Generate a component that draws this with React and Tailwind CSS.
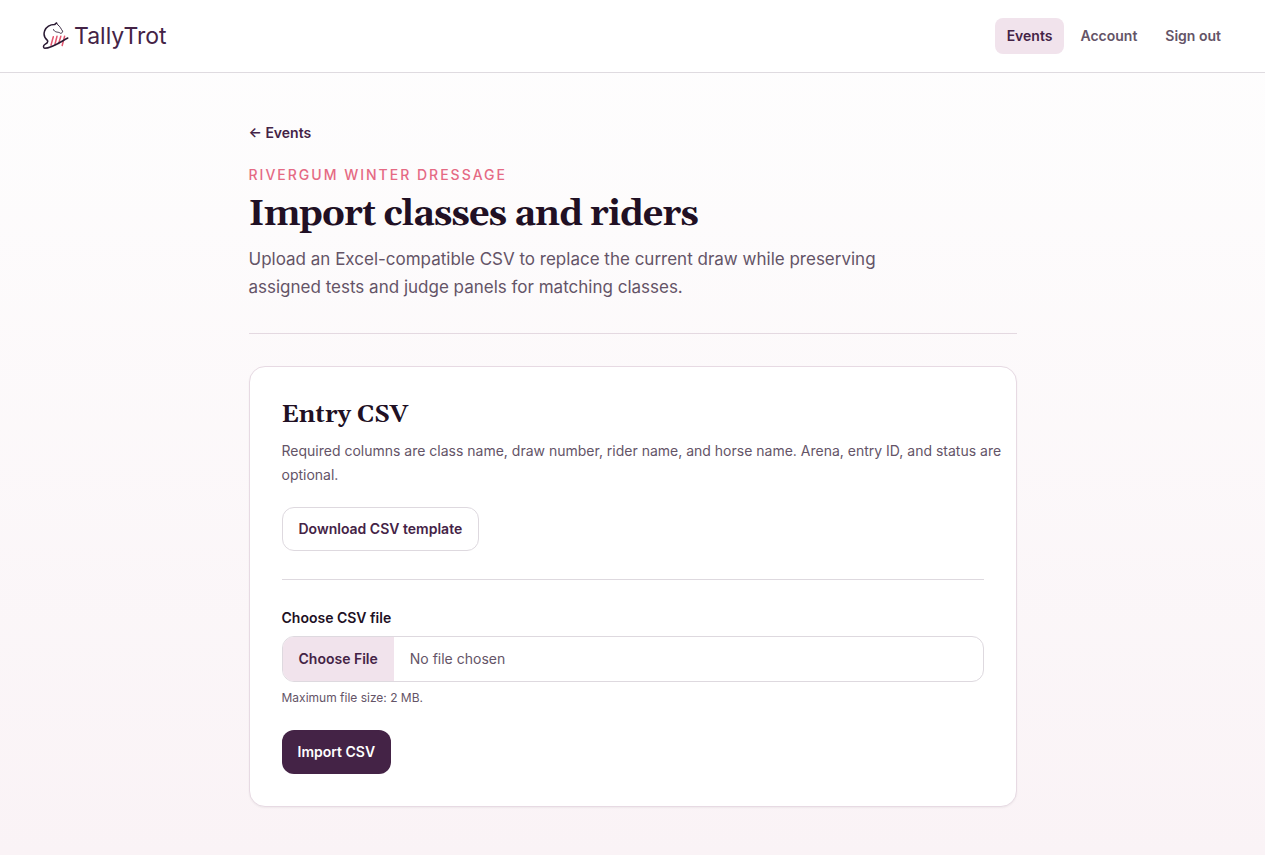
import React, { useState } from 'react';

const navItems = [
  { label: 'Events', href: '#events', current: true },
  { label: 'Account', href: '#account' },
];

const Logo = () => (
  <a href="#home" className="flex items-center gap-1" aria-label="TallyTrot home">
    <svg viewBox="0 0 28 30" className="h-[30px] w-7" fill="none" strokeLinecap="round" strokeLinejoin="round" aria-hidden="true">
      <path d="M11.300 15.800L9 24.300M15 15.300L12.900 23.500M18.800 15.300L16.700 22.500M22.600 15.300L20.200 24.500" stroke="#e2566f" strokeWidth="1.5" />
      <path
        d="M14.600 2C13.800 2.400 13.200 3 12.600 3.600C8.600 3.600 4.500 5.600 2.600 9.900C1.300 13.700 2.600 17.200 5.600 19.700C6.300 21.400 4.600 22.500 2.900 23.400C1.100 24.300 1 27.200 2.700 27.300C9.500 27.300 17 21.800 25.800 17"
        stroke="#2a1a33"
        strokeWidth="1.5"
      />
      <path d="M14.600 2L16 4.100C18 5.100 18.900 7.900 20.600 10.100C20.800 11.300 19.800 12.300 18.500 12.300C17.400 11.300 16 11.300 14.600 11C13 10.600 11.800 9.800 11.500 8.600" stroke="#2a1a33" strokeWidth="0.9" />
    </svg>
    <span className="text-[23px] leading-8 text-[#442346]">TallyTrot</span>
  </a>
);

const Header = () => (
  <header className="border-b border-[#dfdbe0] bg-white">
    <div className="flex h-18 items-center justify-between px-8 sm:pl-[42px]">
      <Logo />
      <nav className="flex items-center gap-1 text-sm font-semibold" aria-label="Main">
        {navItems.map((item) => (
          <a
            key={item.label}
            href={item.href}
            aria-current={item.current ? 'page' : undefined}
            className={`rounded-lg px-3 py-2 ${item.current ? 'bg-[#f1e3ec] text-[#442346]' : 'text-[#645467]'}`}
          >
            {item.label}
          </a>
        ))}
        <button type="button" className="rounded-lg px-3 py-2 text-[#645467]">
          Sign out
        </button>
      </nav>
    </div>
  </header>
);

const ImportForm = () => {
  const [file, setFile] = useState(null);

  return (
    <form className="mt-7 border-t border-[#ded9df] pt-7" onSubmit={(e) => e.preventDefault()}>
      <label htmlFor="csv-file" className="block text-sm font-semibold text-[#211024]">
        Choose CSV file
      </label>
      <input
        id="csv-file"
        type="file"
        accept=".csv"
        aria-describedby="csv-hint"
        onChange={(e) => setFile(e.target.files?.[0] || null)}
        className="mt-2 block w-full overflow-hidden rounded-xl border border-[#ded9df] bg-white text-sm text-[#645467] file:mr-4 file:h-11 file:border-0 file:bg-[#f1e3ec] file:px-4 file:font-semibold file:text-[#442346]"
      />
      <p id="csv-hint" className="mt-2 text-xs text-[#645467]">
        Maximum file size: 2 MB.
      </p>
      <button
        type="submit"
        aria-disabled={!file}
        className="mt-6 h-11 rounded-xl bg-[#442346] px-4 text-sm font-semibold text-white"
      >
        Import CSV
      </button>
    </form>
  );
};

const App = () => (
  <div className="min-h-screen bg-linear-to-b from-[#fefefe] to-[#faf3f6] font-['Inter',sans-serif]">
    <Header />
    <main className="mx-auto max-w-3xl py-12">
      <a href="#events" className="block w-fit text-sm leading-6 font-semibold text-[#442346]">
        ← Events
      </a>
      <div className="mt-5 border-b border-[#e4d9e1] pb-8">
        <p className="text-sm font-medium tracking-[2px] text-[#e56a84] uppercase">Rivergum Winter Dressage</p>
        <h1 className="mt-2 font-[Gelasio,Georgia,'Liberation_Serif',serif] text-4xl leading-11 font-bold tracking-tight text-[#211024]">
          Import classes and riders
        </h1>
        <p className="mt-2 max-w-2xl text-[17px] leading-7 text-[#645467]">
          Upload an Excel-compatible CSV to replace the current draw while preserving assigned tests and judge panels for
          matching classes.
        </p>
      </div>
      <section className="mt-8 rounded-2xl border border-[#e7dae3] bg-white p-8 shadow-xs">
        <h2 className="font-[Gelasio,Georgia,'Liberation_Serif',serif] text-2xl font-bold text-[#211024]">Entry CSV</h2>
        <p className="mt-2 text-sm leading-6 text-[#645467] md:whitespace-nowrap">
          Required columns are class name, draw number, rider name, and horse name. Arena, entry ID, and status are{' '}
          <br className="hidden md:inline" />
          optional.
        </p>
        <a
          href="#template"
          className="mt-5 inline-flex h-11 items-center rounded-xl border border-[#ded9df] bg-white px-4 text-sm font-semibold text-[#442346]"
        >
          Download CSV template
        </a>
        <ImportForm />
      </section>
    </main>
  </div>
);

export default App;
